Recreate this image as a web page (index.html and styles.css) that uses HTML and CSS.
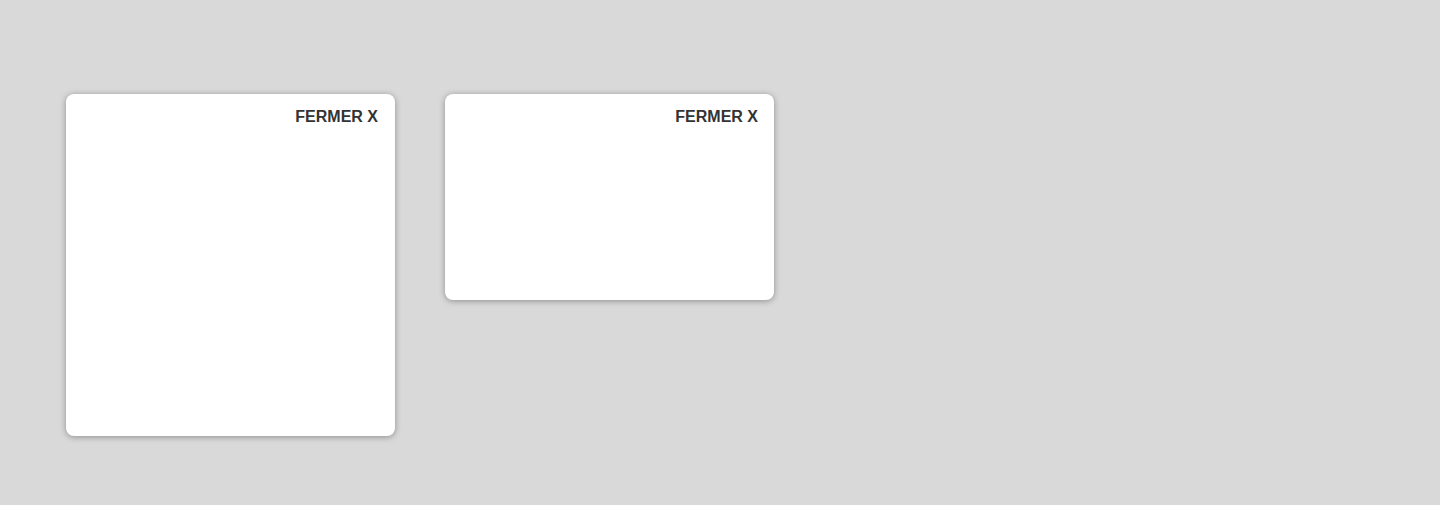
FILE: index.html
```html
<!DOCTYPE html>
<html lang="fr">
<head>
<meta charset="utf-8">
<title>Cards</title>
<link rel="stylesheet" href="styles.css">
</head>
<body>
<main class="stage">
  <section class="card card-tall">
    <div class="card-head"><button class="close">FERMER X</button></div>
  </section>
  <section class="card card-short">
    <div class="card-head"><button class="close">FERMER X</button></div>
  </section>
</main>
</body>
</html>
```
FILE: styles.css
```css
html, body {
  margin: 0;
  padding: 0;
  background: #d9d9d9;
  font-family: "Liberation Sans", Arial, sans-serif;
}
.stage {
  display: flex;
  align-items: flex-start;
  gap: 50px;
  padding: 94px 0 0 66px;
  height: 505px;
  box-sizing: border-box;
}
.card {
  width: 329px;
  background: #fff;
  border-radius: 8px;
  box-shadow: 0 1px 6px rgba(0, 0, 0, 0.35);
  box-sizing: border-box;
}
.card-tall { height: 342px; }
.card-short { height: 206px; }
.card-head {
  display: flex;
  justify-content: flex-end;
  padding: 13px 17px 0 0;
}
.card-short .card-head { padding-right: 16px; }
.close {
  background: none;
  border: 0;
  padding: 0;
  font-family: "Liberation Sans", Arial, sans-serif;
  font-size: 16px;
  line-height: 19px;
  font-weight: bold;
  color: #333;
  cursor: pointer;
}
```
